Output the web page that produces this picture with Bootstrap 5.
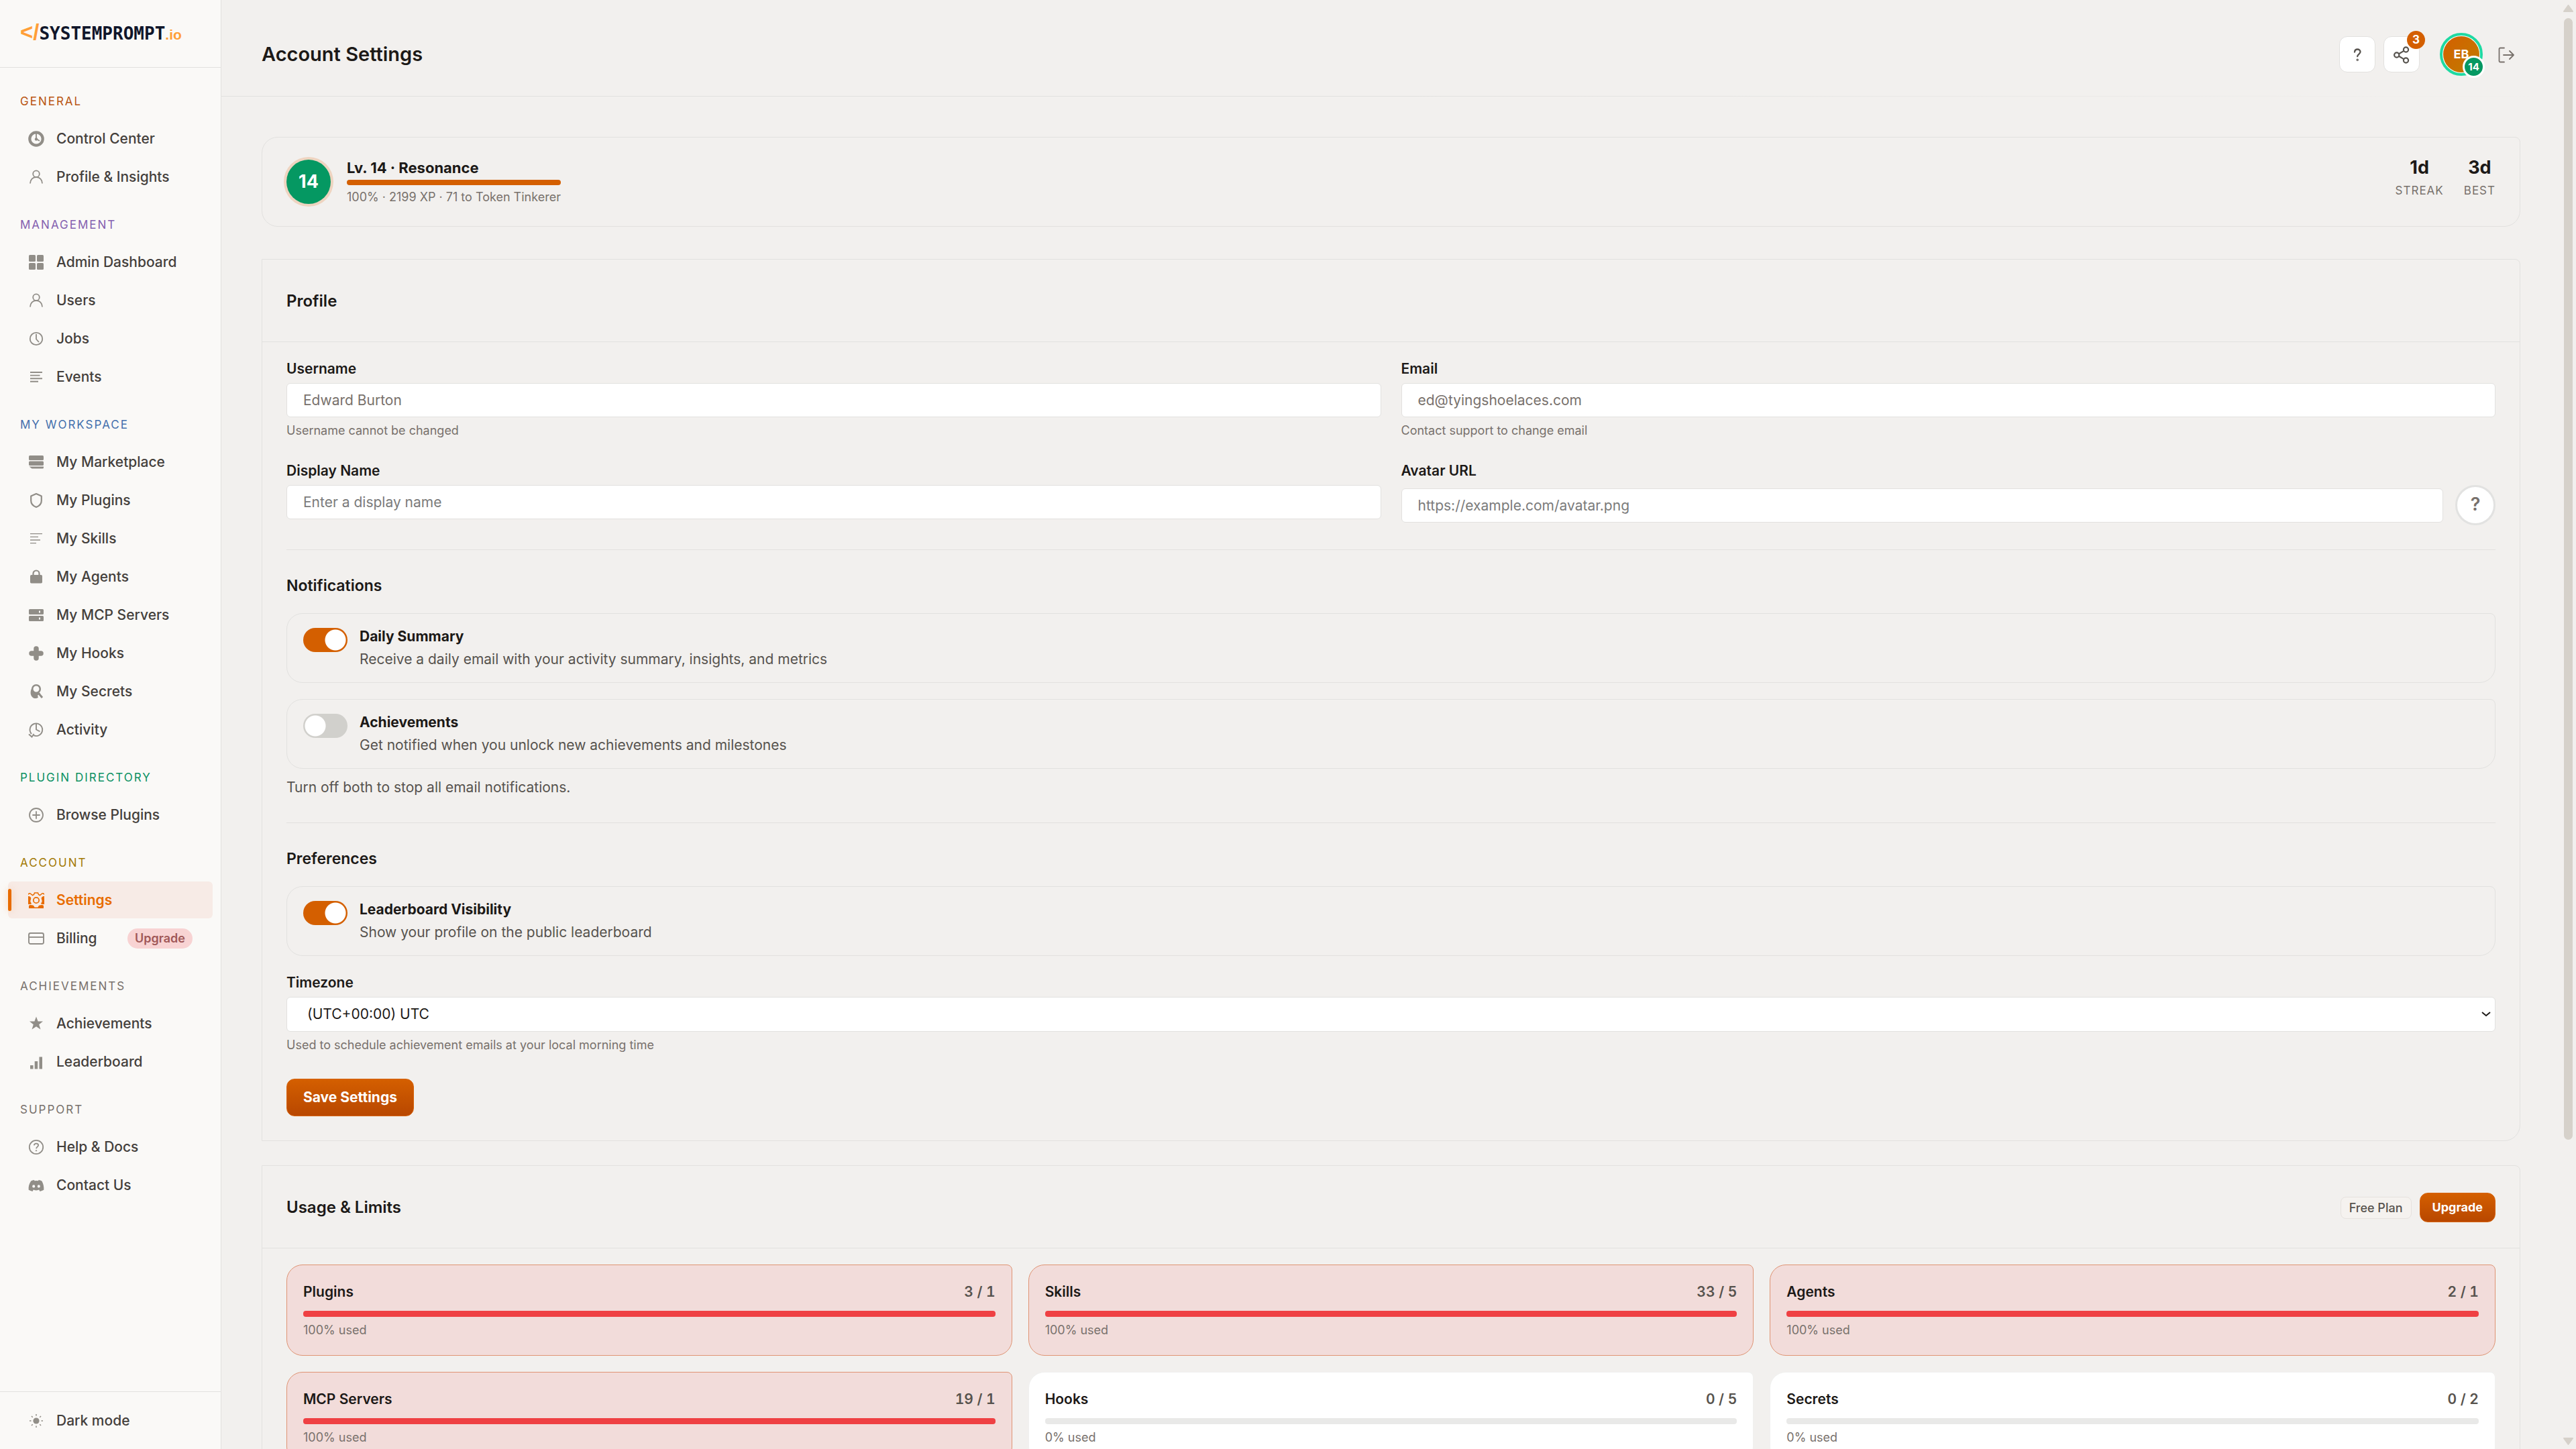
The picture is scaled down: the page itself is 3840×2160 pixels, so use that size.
<!DOCTYPE html>
<html lang="en">
<head>
<meta charset="utf-8">
<meta name="viewport" content="width=device-width, initial-scale=1">
<title>Account Settings</title>
<link href="https://cdn.jsdelivr.net/npm/bootstrap@5.3.0/dist/css/bootstrap.min.css" rel="stylesheet">
<style>
:root{--ink:#1c1917;--soft:#57534e;--mute:#78716c;--line:#e2e1df;--page:#f2f0ee;--brand:#d45f00}
body{font-family:Inter,"Noto Sans",sans-serif;font-size:21px;line-height:32px;color:var(--ink);background:var(--page)}
.shell{height:100vh}
/* sidebar */
.side{width:330px;background:#faf9f7;border-right:1px solid var(--line)}
.brand{height:101px;padding:28px 30px 0;border-bottom:1px solid var(--line);line-height:40px;text-decoration:none;color:#10162a;font-family:"DejaVu Sans Mono",monospace;font-weight:700;font-size:26px}
.brand-mark,.brand-tld{font-family:"Liberation Sans",sans-serif;color:#ff9f38}
.brand-mark{font-size:33px}
.brand-tld{font-size:21px}
.side-nav{padding:38px 12px 0}
.side-group + .side-group{margin-top:32px}
.side-label{font-size:17px;line-height:25px;font-weight:400;letter-spacing:2px;padding:0 18px;margin:0 0 15px;text-transform:uppercase;color:var(--mute)}
.side-item{height:55px;padding:0 30px;gap:18px;border-radius:6px;color:#44403c;font-weight:500;text-decoration:none;background:none;border:0;white-space:nowrap}
.side-group .side-item + .side-item{margin-top:2px}
.side-item svg{width:24px;height:24px;flex:none;color:#918e88}
.side-item.active{background:#f7ebe6;color:#e86c00;font-weight:600;position:relative}
.side-item.active svg{color:#e86c00}
.side-item.active::before{content:"";position:absolute;left:0;top:11px;width:5px;height:33px;border-radius:3px;background:#e86c00;box-shadow:0 0 12px #f0a87088}
.pill{background:#f8d3d3;color:#a05858;font-size:18px;font-weight:600;line-height:30px;padding:0 11px;border-radius:15px}
.side-foot{border-top:1px solid var(--line);padding:15px 12px}
.tone-orange{color:#b95510}.tone-violet{color:#8461b0}.tone-blue{color:#4470ad}.tone-green{color:#0b9163}.tone-gold{color:#a37a05}
/* main */
.view{overflow-y:auto;scrollbar-width:none;min-width:0}
.view::-webkit-scrollbar{display:none}
.rail{width:23px;padding:7px 0 6px}
.rail-thumb{width:13px;height:1672px;margin-top:9px;border-radius:7px;background:#d6d1ca}
.top{height:144px;padding:18px 60px 0;border-bottom:1px solid;border-image:linear-gradient(90deg,var(--line) 50%,transparent) 1}
.top h1{font-size:29px;line-height:36px;font-weight:600;margin:0}
.icon-btn{width:54px;height:54px;border-radius:12px;background:#fff;border:1px solid var(--line);color:#57534e;font-weight:600;padding:0}
.icon-btn + .icon-btn{margin-left:12px}
.count{position:absolute;top:-9px;right:-9px;width:27px;height:27px;border-radius:50%;background:var(--brand);color:#fff;font-size:17px;line-height:27px;font-weight:700}
.avatar{width:64px;height:64px;border-radius:50%;border:4px solid #1fd9a2;padding:1px;background:#fff;margin-left:30px}
.avatar-face{border-radius:50%;background:linear-gradient(135deg,#d45f00,#bf7d00);color:#fff;font-size:18px;font-weight:700}
.avatar-lv{position:absolute;right:-7px;bottom:-7px;width:33px;height:33px;border-radius:50%;border:3px solid #fff;background:#059862;color:#fff;font-size:15px;line-height:27px;font-weight:700;text-align:center}
.exit{padding:0 9px;background:none;border:0;color:var(--mute);margin-left:14px}
.content{padding:60px 60px 36px}
.panel-box{border:1px solid var(--line);border-radius:0 8px 24px 0;margin-bottom:36px}
.level{height:134px;padding:0 36px;border:1px solid var(--line);border-radius:24px 8px 24px 24px;margin-bottom:48px;gap:24px}
.level-no{width:66px;height:66px;border-radius:50%;background:#059862;box-shadow:0 0 0 4px #eed4c0;color:#fff;font-size:27px;font-weight:700}
.level-name{font-size:22px;font-weight:700;line-height:32px;margin-bottom:2px}
.level-track{height:8px;border-radius:4px;background:var(--line);overflow:hidden}
.level-track div{height:100%;background:var(--brand)}
.tiny{font-size:18px;line-height:28px;color:var(--mute)}
.stats-row{gap:30px;padding-bottom:8px}
.stat{text-align:center}
.stat b{display:block;font-size:27px;line-height:34px;font-weight:700}
.stat span{display:block;font-size:17px;line-height:34px;letter-spacing:1px;color:var(--mute)}
.panel-head{height:123px;padding:2px 36px 0;border-bottom:1px solid var(--line)}
.panel-head h2{font-size:24px;line-height:36px;font-weight:600;margin:0}
.panel-main{padding:24px 36px 36px}
.pair{--bs-gutter-x:30px;--bs-gutter-y:30px}
.lab{display:block;font-weight:600;line-height:31px;margin-bottom:6px}
.lab-note{margin:6px 0 0}
.field{display:block;width:100%;height:51px;padding:0 24px;border:1px solid var(--line);border-radius:6px;background:#fff;color:var(--ink);font-size:21px}
.field::placeholder{color:#7b7b7b;opacity:1}
.field:disabled{color:var(--mute)}
select.field{height:52px;padding-left:30px;appearance:none;background:#fff url("data:image/svg+xml,%3Csvg xmlns='http://www.w3.org/2000/svg' width='14' height='8' fill='none' stroke='%231c1917' stroke-width='2'%3E%3Cpath d='M1 1l6 5 6-5'/%3E%3C/svg%3E") no-repeat right 6px center}
.avatar-row{gap:18px}
.round-q{width:60px;height:60px;flex:none;border-radius:50%;border:3px solid #e2e2e1;background:#fff;color:var(--mute);font-size:27px;font-weight:600;padding:0 0 2px}
.block{border-top:1px solid var(--line);margin-top:36px;padding-top:36px}
.block h3{font-size:23px;line-height:35px;font-weight:600;margin:0 0 23px}
.opt{border:1px solid var(--line);border-radius:24px 8px 24px 24px;padding:18px 24px;gap:18px}
.opt + .opt{margin-top:24px}
.opt .form-check-input{width:66px;height:36px;margin:3px 0 0;float:none;flex:none;border:0;background-color:#d1d0cc;background-image:radial-gradient(circle,#fff 15px,transparent 16px);background-size:36px 36px;background-position:left center}
.opt .form-check-input:checked{background-color:var(--brand);background-image:radial-gradient(circle,#fff 15px,transparent 16px);background-position:right center}
.opt-name{display:block;font-weight:700;line-height:31px}
.opt-text{margin:3px 0 0;color:var(--soft)}
.note{margin:12px 0 0;color:var(--soft)}
.cta{border:1px solid #d76307;border-radius:12px;background:linear-gradient(#d45f00,#b84700);color:#fff;font-weight:700;font-size:21px;height:56px;padding:0 24px}
.cta:hover{color:#fff}
.cta-sm{font-size:18px;height:44px;padding:0 18px;line-height:24px}
.save{margin-top:36px}
.plan-row{gap:12px}
.plan{font-size:18px;line-height:31px;font-weight:500;color:var(--soft);background:#f5f2ef;border:1px solid #e6e2de;border-radius:8px;padding:0 12px}
.limits{--bs-gutter-x:24px;--bs-gutter-y:24px}
.limit{border:1px solid #f0f0ef;background:#fff;border-radius:24px 8px 24px 24px;padding:24px;font-weight:600}
.limit.over{background:#f2dcda;border-color:#df9474}
.limit-track{height:9px;margin:12px 0 6px;border-radius:4px;background:#e9e9e8;overflow:hidden}
.limit-track div{height:100%;background:#ef4043}
.limit .tiny{line-height:27px;font-weight:400}
.used{color:var(--soft);font-variant-numeric:tabular-nums}
</style>
</head>
<body>
<div class="shell d-flex overflow-hidden">
  <aside class="side d-flex flex-column flex-shrink-0">
    <a href="#" class="brand d-block text-nowrap" aria-label="systemprompt.io"><span class="d-flex align-items-baseline"><span class="brand-mark">&lt;/</span>SYSTEMPROMPT<span class="brand-tld">.io</span></span></a>
    <nav class="side-nav flex-grow-1 overflow-hidden">
      <div class="side-group">
        <h6 class="side-label tone-orange">General</h6>
        <a href="#" class="side-item d-flex align-items-center"><svg viewBox="0 0 24 24" fill="none" stroke="currentColor"><circle cx="12" cy="12" r="9.7" stroke-width="4.2"/><path d="M12 4v8l5 3" stroke-width="1.8"/><circle cx="12" cy="12.5" r="2.2" fill="currentColor" stroke="none"/></svg>Control Center</a>
        <a href="#" class="side-item d-flex align-items-center"><svg viewBox="0 0 24 24" fill="none" stroke="currentColor" stroke-width="1.8"><circle cx="12" cy="7.2" r="4.8"/><path d="M3 21.5c0-5.500 4-9.500 9-9.500s9 4 9 9.500"/></svg>Profile &amp; Insights</a>
      </div>
      <div class="side-group">
        <h6 class="side-label tone-violet">Management</h6>
        <a href="#" class="side-item d-flex align-items-center"><svg viewBox="0 0 24 24" fill="currentColor"><rect x="1" y="1" width="10" height="10" rx="1.5"/><rect x="13" y="1" width="10" height="10" rx="1.5"/><rect x="1" y="13" width="10" height="10" rx="1.5"/><rect x="13" y="13" width="10" height="10" rx="1.5"/></svg>Admin Dashboard</a>
        <a href="#" class="side-item d-flex align-items-center"><svg viewBox="0 0 24 24" fill="none" stroke="currentColor" stroke-width="1.8"><circle cx="12" cy="7.2" r="4.8"/><path d="M3 21.5c0-5.500 4-9.500 9-9.500s9 4 9 9.500"/></svg>Users</a>
        <a href="#" class="side-item d-flex align-items-center"><svg viewBox="0 0 24 24" fill="none" stroke="currentColor" stroke-width="1.8"><circle cx="12" cy="12" r="9.2"/><path d="M12 5v7.500l4 4.500"/></svg>Jobs</a>
        <a href="#" class="side-item d-flex align-items-center"><svg viewBox="0 0 24 24" fill="none" stroke="currentColor" stroke-width="1.9"><path d="M3 5h18M3 9.600h14.500M3 14.200h18M3 18.800h12"/></svg>Events</a>
      </div>
      <div class="side-group">
        <h6 class="side-label tone-blue">My Workspace</h6>
        <a href="#" class="side-item d-flex align-items-center"><svg viewBox="0 0 24 24" fill="currentColor"><rect x="1" y="2" width="22" height="7" rx="1.5"/><rect x="1" y="10.500" width="22" height="6.500" rx="1.5"/><path d="M1.500 18.500H23V20a1.500 1.500 0 0 1-1.500 1.500h-16z"/></svg>My Marketplace</a>
        <a href="#" class="side-item d-flex align-items-center"><svg viewBox="0 0 24 24" fill="none" stroke="currentColor" stroke-width="2.2" stroke-linejoin="round"><path d="M12 2 4.200 5.500v7c0 4.500 3.200 7.700 7.800 9.500 4.600-1.800 7.800-5 7.800-9.500v-7z"/></svg>My Plugins</a>
        <a href="#" class="side-item d-flex align-items-center"><svg viewBox="0 0 24 24" fill="none" stroke="currentColor" stroke-width="1.3"><path d="M3 4.700h18M3 9.300h12M3 14h15M3 18.700h9"/></svg>My Skills</a>
        <a href="#" class="side-item d-flex align-items-center"><svg viewBox="0 0 24 24"><rect x="3" y="9" width="18" height="12.500" rx="1.8" fill="currentColor"/><path d="M7.500 10V7a4.500 4.500 0 0 1 9 0v3" fill="none" stroke="currentColor" stroke-width="2.2"/></svg>My Agents</a>
        <a href="#" class="side-item d-flex align-items-center"><svg viewBox="0 0 24 24" fill="currentColor" fill-rule="evenodd"><path d="M2.500 3h19A1.500 1.500 0 0 1 23 4.500v5a1.500 1.500 0 0 1-1.500 1.500h-19A1.500 1.500 0 0 1 1 9.500v-5A1.500 1.500 0 0 1 2.500 3zm13.500 2.500v3h2v-3zM2.500 13h19a1.500 1.500 0 0 1 1.500 1.500v5a1.500 1.500 0 0 1-1.500 1.500h-19A1.500 1.500 0 0 1 1 19.500v-5A1.500 1.500 0 0 1 2.500 13zm13.500 2.500v3h2v-3z"/></svg>My MCP Servers</a>
        <a href="#" class="side-item d-flex align-items-center"><svg viewBox="0 0 24 24" stroke="currentColor" stroke-width="7.500" stroke-linecap="round"><path d="M12 5v14M5 12h14"/></svg>My Hooks</a>
        <a href="#" class="side-item d-flex align-items-center"><svg viewBox="0 0 24 24" fill="none" stroke="currentColor"><circle cx="12" cy="8" r="5.800" stroke-width="2.600"/><path d="M6 6C3 10 2.500 17 6.500 20.500c2.500 2 6 2 8.500 0L14 18l4-4-3-1c-3 2-6 0-8-3z" fill="currentColor" stroke="none"/><path d="m16 15 5 6" stroke-width="3"/></svg>My Secrets</a>
        <a href="#" class="side-item d-flex align-items-center"><svg viewBox="0 0 24 24" fill="none" stroke="currentColor" stroke-width="1.9"><path d="M5 18a9.300 9.300 0 1 1 3 2.200"/><path d="M12 2v9.500l5.500 3M1 18.500l4.500 4 3-4.500"/></svg>Activity</a>
      </div>
      <div class="side-group">
        <h6 class="side-label tone-green">Plugin Directory</h6>
        <a href="#" class="side-item d-flex align-items-center"><svg viewBox="0 0 24 24" fill="none" stroke="currentColor" stroke-width="1.8" stroke-linecap="round"><circle cx="12" cy="12" r="10"/><path d="M12 7v10M7 12h10"/></svg>Browse Plugins</a>
      </div>
      <div class="side-group">
        <h6 class="side-label tone-gold">Account</h6>
        <a href="#" class="side-item active d-flex align-items-center" aria-current="page"><svg viewBox="0 0 24 24" fill="none" stroke="currentColor" stroke-width="1.7"><circle cx="12" cy="12" r="4.200"/><path d="M0 3.500C1 1.500 3 1 4.500 3l2 1.500 2-1L9.500 1h5l1 2.500 2 1 2-1.500C21 1 23 1.500 24 3.500" stroke-width="1.5"/><path d="M0 6c3 0 5 2 4 4.500S3 14 4.500 16 3 18 0 18zM24 6c-3 0-5 2-4 4.500s1 3.500-.5 5.500S21 18 24 18zM1 24v-4c2-2 4-.5 6-.5 1 0 2 1.500 2.500 3h5c.5-1.500 1.500-3 2.500-3 2 0 4-1.500 6 .5v4z" fill="currentColor" stroke="none"/></svg>Settings</a>
        <a href="#" class="side-item d-flex align-items-center"><svg viewBox="0 0 24 24" fill="none" stroke="currentColor" stroke-width="1.9"><rect x="1" y="4" width="22" height="16" rx="2.500"/><path d="M1 10h22"/></svg>Billing<span class="pill ms-auto">Upgrade</span></a>
      </div>
      <div class="side-group">
        <h6 class="side-label">Achievements</h6>
        <a href="#" class="side-item d-flex align-items-center"><svg viewBox="0 0 24 24" fill="currentColor"><path d="m12 1.500 2.600 7H22l-5.800 4.700 2.300 7.300-6.500-4.300-6.500 4.300 2.300-7.300L2 8.500h7.400z"/></svg>Achievements</a>
        <a href="#" class="side-item d-flex align-items-center"><svg viewBox="0 0 24 24" fill="currentColor"><path d="M3 17h4.500v5.500H3zM9.700 11h4.500v11.500H9.700zM16.500 4.500H21v18h-4.500z"/></svg>Leaderboard</a>
      </div>
      <div class="side-group">
        <h6 class="side-label">Support</h6>
        <a href="#" class="side-item d-flex align-items-center"><svg viewBox="0 0 24 24" fill="none" stroke="currentColor" stroke-width="1.8"><circle cx="12" cy="12" r="10.200"/><path d="M8.800 9.300C9 7.500 10.300 6.600 12 6.600s3.200 1 3.200 2.700c0 2-3.100 2.200-3.100 5"/><circle cx="12" cy="17.300" r=".7" fill="currentColor" stroke-width="1"/></svg>Help &amp; Docs</a>
        <a href="#" class="side-item d-flex align-items-center"><svg viewBox="0 0 24 24" fill="currentColor"><path fill-rule="evenodd" d="M20.300 5.400A19 19 0 0 0 15.600 4l-.6 1.200a18 18 0 0 0-5.500 0L8.900 4a19 19 0 0 0-4.700 1.400C1 10 .300 14.400.700 18.800A19.500 19.500 0 0 0 6.500 21l1.300-2.400q2.700.9 4.200.9t4.200-.9L17.500 21a19.500 19.500 0 0 0 5.800-2.200c.5-5.200-.8-9.600-3-13.400zM8.200 15.500a2 2 0 0 1-2-2.200 2 2 0 1 1 4 0 2 2 0 0 1-2 2.200zm7.600 0a2 2 0 0 1-2-2.200 2 2 0 1 1 4 0 2 2 0 0 1-2 2.200z"/></svg>Contact Us</a>
      </div>
    </nav>
    <div class="side-foot">
      <button type="button" class="side-item d-flex align-items-center w-100"><svg viewBox="0 0 24 24" fill="none" stroke="currentColor" stroke-width="1.5"><circle cx="12" cy="12" r="4.600" fill="currentColor" stroke="none"/><path d="M12 2v2.500M12 19.500V22M2 12h2.500M19.500 12H22M5 5l1.700 1.700M17.300 17.300 19 19M5 19l1.700-1.700M17.300 6.700 19 5"/></svg>Dark mode</button>
    </div>
  </aside>

  <main class="view flex-grow-1">
    <header class="top d-flex align-items-center">
      <h1>Account Settings</h1>
      <div class="d-flex align-items-center ms-auto">
        <button type="button" class="icon-btn" aria-label="Help"><svg width="22" height="22" viewBox="0 0 22 22" fill="none" stroke="currentColor" stroke-width="2.3" stroke-linecap="round"><path d="M7 6.500c.2-2.500 2-4 4.300-4s4.200 1.500 4.200 3.800c0 3.200-4 3.200-4.300 6.700"/><circle cx="11.200" cy="18.300" r=".6"/></svg></button>
        <button type="button" class="icon-btn position-relative" aria-label="Share"><svg width="24" height="26" viewBox="0 0 24 26" fill="none" stroke="currentColor" stroke-width="2.2"><circle cx="4.700" cy="13" r="3.600"/><circle cx="18.500" cy="5" r="3.600"/><circle cx="18.500" cy="21" r="3.600"/><path d="m8 11.200 7.300-4.300M8 14.800l7.300 4.300"/></svg><span class="count">3</span></button>
        <a href="#" class="avatar d-flex position-relative text-decoration-none" aria-label="Your profile"><span class="avatar-face flex-grow-1 d-flex align-items-center justify-content-center">EB</span><span class="avatar-lv">14</span></a>
        <button type="button" class="exit" aria-label="Sign out"><svg width="24" height="24" viewBox="0 0 24 24" fill="none" stroke="currentColor" stroke-width="1.8" stroke-linecap="round" stroke-linejoin="round"><path d="M9 1.500H3A1.500 1.500 0 0 0 1.500 3v18A1.500 1.500 0 0 0 3 22.500h6M8 12h15M17 6l6 6-6 6"/></svg></button>
      </div>
    </header>

    <div class="content">
      <section class="level d-flex align-items-center">
        <div class="level-no d-flex align-items-center justify-content-center">14</div>
        <div>
          <div class="level-name">Lv. 14 · Resonance</div>
          <div class="level-track"><div style="width:100%"></div></div>
          <div class="tiny pt-1">100% · 2199 XP · 71 to Token Tinkerer</div>
        </div>
        <div class="d-flex ms-auto stats-row">
          <div class="stat"><b>1d</b><span>STREAK</span></div>
          <div class="stat"><b>3d</b><span>BEST</span></div>
        </div>
      </section>

      <form class="panel-box">
        <div class="panel-head d-flex align-items-center"><h2>Profile</h2></div>
        <div class="panel-main">
          <div class="row pair">
            <div class="col-md-6">
              <label class="lab" for="user">Username</label>
              <input class="field" id="user" type="text" value="Edward Burton" disabled>
              <p class="tiny lab-note">Username cannot be changed</p>
            </div>
            <div class="col-md-6">
              <label class="lab" for="mail">Email</label>
              <input class="field" id="mail" type="email" value="ed@tyingshoelaces.com" disabled>
              <p class="tiny lab-note">Contact support to change email</p>
            </div>
            <div class="col-md-6">
              <label class="lab" for="display">Display Name</label>
              <input class="field" id="display" type="text" placeholder="Enter a display name">
            </div>
            <div class="col-md-6">
              <label class="lab" for="avatar">Avatar URL</label>
              <div class="d-flex align-items-center avatar-row">
                <input class="field" id="avatar" type="url" placeholder="https://example.com/avatar.png">
                <button type="button" class="round-q" aria-label="Avatar preview">?</button>
              </div>
            </div>
          </div>

          <div class="block">
            <h3>Notifications</h3>
            <div class="opt d-flex form-switch">
              <input class="form-check-input" type="checkbox" role="switch" id="daily" checked>
              <div><label class="opt-name" for="daily">Daily Summary</label><p class="opt-text">Receive a daily email with your activity summary, insights, and metrics</p></div>
            </div>
            <div class="opt d-flex form-switch">
              <input class="form-check-input" type="checkbox" role="switch" id="achv">
              <div><label class="opt-name" for="achv">Achievements</label><p class="opt-text">Get notified when you unlock new achievements and milestones</p></div>
            </div>
            <p class="note">Turn off both to stop all email notifications.</p>
          </div>

          <div class="block">
            <h3>Preferences</h3>
            <div class="opt d-flex form-switch">
              <input class="form-check-input" type="checkbox" role="switch" id="board" checked>
              <div><label class="opt-name" for="board">Leaderboard Visibility</label><p class="opt-text">Show your profile on the public leaderboard</p></div>
            </div>
            <div class="pt-4">
              <label class="lab" for="tz">Timezone</label>
              <select class="field" id="tz"><option>(UTC+00:00) UTC</option></select>
              <p class="tiny lab-note">Used to schedule achievement emails at your local morning time</p>
            </div>
          </div>
          <button type="submit" class="btn cta save">Save Settings</button>
        </div>
      </form>

      <section class="panel-box">
        <div class="panel-head d-flex align-items-center justify-content-between">
          <h2>Usage &amp; Limits</h2>
          <div class="d-flex align-items-center plan-row"><span class="plan">Free Plan</span><button type="button" class="btn cta cta-sm">Upgrade</button></div>
        </div>
        <div class="panel-main">
          <div class="row limits">
            <div class="col-md-4"><div class="limit over"><div class="d-flex justify-content-between"><span>Plugins</span><span class="used">3 / 1</span></div><div class="limit-track"><div style="width:100%"></div></div><div class="tiny">100% used</div></div></div>
            <div class="col-md-4"><div class="limit over"><div class="d-flex justify-content-between"><span>Skills</span><span class="used">33 / 5</span></div><div class="limit-track"><div style="width:100%"></div></div><div class="tiny">100% used</div></div></div>
            <div class="col-md-4"><div class="limit over"><div class="d-flex justify-content-between"><span>Agents</span><span class="used">2 / 1</span></div><div class="limit-track"><div style="width:100%"></div></div><div class="tiny">100% used</div></div></div>
            <div class="col-md-4"><div class="limit over"><div class="d-flex justify-content-between"><span>MCP Servers</span><span class="used">19 / 1</span></div><div class="limit-track"><div style="width:100%"></div></div><div class="tiny">100% used</div></div></div>
            <div class="col-md-4"><div class="limit"><div class="d-flex justify-content-between"><span>Hooks</span><span class="used">0 / 5</span></div><div class="limit-track"><div style="width:0%"></div></div><div class="tiny">0% used</div></div></div>
            <div class="col-md-4"><div class="limit"><div class="d-flex justify-content-between"><span>Secrets</span><span class="used">0 / 2</span></div><div class="limit-track"><div style="width:0%"></div></div><div class="tiny">0% used</div></div></div>
          </div>
        </div>
      </section>
    </div>
  </main>

  <div class="rail d-flex flex-column align-items-center flex-shrink-0" aria-hidden="true">
    <svg width="15" height="11" viewBox="0 0 15 11" fill="#d6d1ca" stroke="#d6d1ca" stroke-width="2" stroke-linejoin="round"><path d="M7.500 1 14 10H1z"/></svg>
    <div class="rail-thumb"></div>
    <svg class="mt-auto" width="15" height="11" viewBox="0 0 15 11" fill="#d6d1ca" stroke="#d6d1ca" stroke-width="2" stroke-linejoin="round"><path d="M7.500 10 14 1H1z"/></svg>
  </div>
</div>
<script src="https://cdn.jsdelivr.net/npm/bootstrap@5.3.0/dist/js/bootstrap.bundle.min.js"></script>
</body>
</html>
